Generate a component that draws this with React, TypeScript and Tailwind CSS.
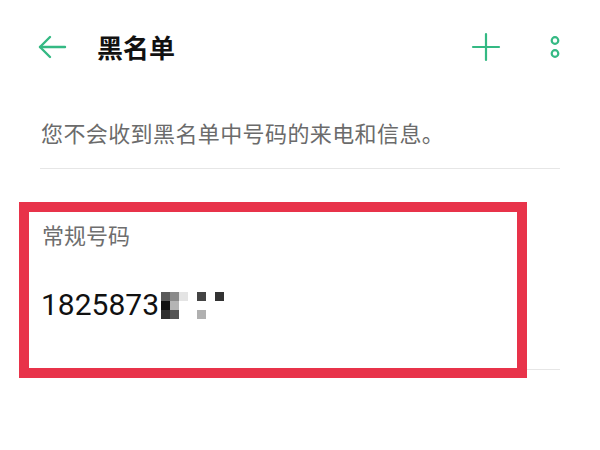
import React from "react";

const cjk = { fontFamily: '"Noto Sans CJK SC", "Noto Sans", sans-serif' };

const cells: string[] = [
  "#5a5a5a", "#8a8a8a", "#e4e4e4", "", "#444444", "", "#333333",
  "#111111", "#b4b4b4", "", "", "", "", "",
  "#2e2e2e", "#555555", "", "", "#b0b0b0", "", "",
];

function Blocks() {
  return (
    <div className="ml-[2px] grid grid-cols-[repeat(7,9px)] grid-rows-[repeat(3,9px)]">
      {cells.map((c, i) => (
        <div key={i} style={c ? { backgroundColor: c } : undefined} />
      ))}
    </div>
  );
}

export default function App() {
  return (
    <div className="relative h-[450px] w-[600px] overflow-hidden bg-white" style={cjk}>
      {/* Header */}
      <div className="flex h-[94px] items-center pl-[37px] pr-[39px]">
        <svg width="30" height="28" viewBox="0 0 30 28" fill="none" stroke="#34b983" strokeWidth="2.4" strokeLinecap="round" strokeLinejoin="round">
          <path d="M28 14H3" />
          <path d="M13 4L3 14l10 10" />
        </svg>
        <div className="ml-[30px] text-[26px] font-semibold leading-none text-[#111]">黑名单</div>
        <svg className="ml-auto" width="30" height="30" viewBox="0 0 30 30" fill="none" stroke="#34b983" strokeWidth="2.2" strokeLinecap="round">
          <path d="M15 2v26" />
          <path d="M2 15h26" />
        </svg>
        <svg className="ml-[48px]" width="12" height="24" viewBox="0 0 12 24" fill="none" stroke="#34b983" strokeWidth="2.2">
          <circle cx="6" cy="5.5" r="3.3" />
          <circle cx="6" cy="18.5" r="3.3" />
        </svg>
      </div>

      {/* Description */}
      <div className="flex flex-col px-[40px]">
        <div className="pl-[1px] pt-[24px] text-[22px] leading-[28px] tracking-[0.4px] text-[#6b6b6b]">您不会收到黑名单中号码的来电和信息。</div>
        <div className="mt-[22px] h-px bg-[#e6e6e6]" />
      </div>

      {/* Item */}
      <div className="flex flex-col px-[40px]">
        <div className="pl-[2px] pt-[51px] text-[22px] leading-[28px] text-[#6e6e6e]">常规号码</div>
        <div className="mt-[40px] flex items-center pl-[1px]">
          <span className="text-[30px] leading-[34px] text-[#111]" style={{ fontFamily: "Roboto, sans-serif" }}>1825873</span>
          <Blocks />
        </div>
        <div className="mt-[47px] h-px bg-[#e6e6e6]" />
      </div>

      {/* Annotation box drawn over the list item */}
      <div className="absolute left-[19px] top-[202px] h-[176px] w-[508px] border-[10px] border-[#e8334a]" />
    </div>
  );
}
